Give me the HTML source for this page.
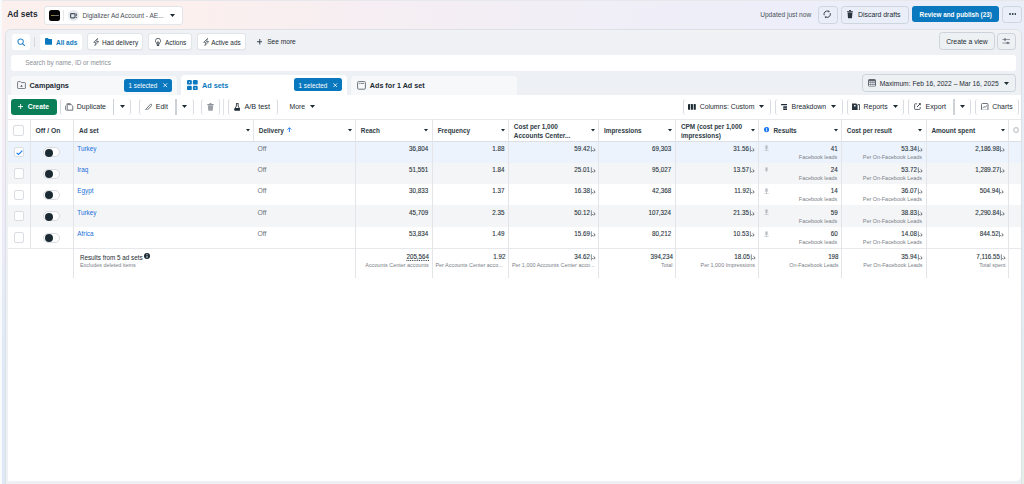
<!DOCTYPE html>
<html><head><meta charset="utf-8"><style>
*{box-sizing:border-box;margin:0;padding:0}
html,body{width:1024px;height:484px;overflow:hidden}
body{font-family:"Liberation Sans",sans-serif;color:#1c2b33;position:relative;
background:linear-gradient(90deg,#fcf0ef 0%,#fcf0ee 18%,#f6eef2 35%,#f1eef6 55%,#edeef9 75%,#e9eef9 100%);}
.abs{position:absolute}
.t{position:absolute;white-space:nowrap;line-height:1}
</style></head><body>
<div class="abs" style="left:0px;top:0px;width:1024px;height:1.2px;background:#e6e8ec"></div>
<div class="abs" style="left:0px;top:0px;width:1.5px;height:484px;background:#f9fafb"></div>
<div class="abs" style="left:1.5px;top:28px;width:4px;height:456px;background:linear-gradient(180deg,#fbeff0 0px,#f7eef3 80px,#efebf8 180px,#e3ebf7 280px,#dde9f6 340px,#dde9f6 456px)"></div>
<div class="abs" style="left:1021px;top:28px;width:3px;height:456px;background:linear-gradient(180deg,#e9eef9 0px,#e5edf6 150px,#e2ecf3 260px,#e3efe8 456px)"></div>
<div class="t" style="left:7.30px;top:10.09px;font-size:8.4px;font-weight:700;color:#1c2b33;">Ad sets</div>
<div class="abs" style="left:43.5px;top:6px;width:139px;height:18.8px;background:#fff;border:1px solid #e2e5e9;border-radius:3px"></div>
<div class="abs" style="left:49px;top:10px;width:11px;height:11px;background:#050505;border-radius:2.5px"></div>
<div class="abs" style="left:51px;top:15.2px;width:3px;height:0.8px;background:#8f8433"></div>
<div class="abs" style="left:54px;top:15.2px;width:5px;height:0.8px;background:#6e6e6e"></div>
<div class="abs" style="left:63.3px;top:10px;width:1px;height:11px;background:#e4e6ea"></div>
<div class="abs" style="left:68px;top:10px;width:10.5px;height:11px;background:#e6eaef;border-radius:50%"></div>
<svg class="abs" style="left:70px;top:13px" width="7" height="5.5" viewBox="0 0 7 5.5"><rect x="0.6" y="0.6" width="4.4" height="4.2" rx="0.8" fill="none" stroke="#4b5563" stroke-width="1.2"/><rect x="5.8" y="0.5" width="1" height="2.6" fill="#4b5563"/><rect x="5.8" y="4" width="1" height="1" fill="#4b5563"/></svg>
<div class="t" style="left:82.50px;top:13.06px;font-size:6.55px;font-weight:400;color:#4a5058;">Digializer Ad Account - AE...</div>
<svg class="abs" style="left:170.3px;top:13.7px" width="5" height="3" viewBox="0 0 5 3"><path d="M0 0H5L2.5 3Z" fill="#1c2b33"/></svg>
<div class="t" style="left:760.20px;top:12.01px;font-size:6.6px;font-weight:400;color:#4a5058;">Updated just now</div>
<div class="abs" style="left:818px;top:5.5px;width:19.5px;height:18px;background:rgba(233,238,247,0.6);border:1px solid #cfd5dd;border-radius:3.5px"></div>
<svg class="abs" style="left:823.3px;top:10.2px" width="8.4" height="8.4" viewBox="0 0 8.4 8.4"><path d="M7.21 3.11A3.2 3.2 0 0 1 3.11 7.21" fill="none" stroke="#39424b" stroke-width="1"/><path d="M1.19 5.29A3.2 3.2 0 0 1 5.29 1.19" fill="none" stroke="#39424b" stroke-width="1"/><path d="M1.60 6.66L2.66 8.43L3.55 5.99Z" fill="#39424b"/><path d="M6.80 1.74L5.74 -0.03L4.85 2.41Z" fill="#39424b"/></svg>
<div class="abs" style="left:840.5px;top:5.5px;width:68.5px;height:18px;background:rgba(233,238,247,0.6);border:1px solid #cfd5dd;border-radius:3.5px"></div>
<svg class="abs" style="left:846.8px;top:10.3px" width="6" height="8.3" viewBox="0 0 6 8.3"><rect x="0" y="1.2" width="6" height="1" rx="0.4" fill="#2b3540"/><rect x="2" y="0" width="2" height="1.5" rx="0.5" fill="#2b3540"/><path d="M0.6 2.6H5.4L5 8.2H1Z" fill="#2b3540"/></svg>
<div class="t" style="left:858.00px;top:11.66px;font-size:6.9px;font-weight:400;color:#1c2b33;">Discard drafts</div>
<div class="abs" style="left:912px;top:6.3px;width:87.3px;height:16.2px;background:#0a78be;border-radius:3px"></div>
<div class="t" style="left:919.60px;top:11.92px;font-size:6.35px;font-weight:700;color:#fff;">Review and publish (23)</div>
<div class="abs" style="left:1002.3px;top:5.5px;width:20px;height:17.7px;background:rgba(233,238,247,0.6);border:1px solid #cfd5dd;border-radius:3.5px"></div>
<svg class="abs" style="left:1008.6px;top:13.4px" width="7.5" height="2" viewBox="0 0 7.5 2"><circle cx="1" cy="1" r="0.95" fill="#2b3540"/><circle cx="3.75" cy="1" r="0.95" fill="#2b3540"/><circle cx="6.5" cy="1" r="0.95" fill="#2b3540"/></svg>
<div class="abs" style="left:5px;top:28.5px;width:1017px;height:470px;background:linear-gradient(180deg,#f0f2f5 0px,#edf0f4 30px,#eef1f4 100px);border:1px solid #dde1e6;border-radius:6px"></div>
<div class="abs" style="left:12px;top:33.5px;width:18.3px;height:16.5px;background:#fff;border-radius:3px"></div>
<svg class="abs" style="left:16.5px;top:37.5px" width="8.5" height="8.5" viewBox="0 0 8.5 8.5"><circle cx="3.6" cy="3.6" r="2.7" fill="none" stroke="#2f86c8" stroke-width="1.05"/><path d="M5.6 5.6L7.8 7.8" stroke="#2f86c8" stroke-width="1.2" stroke-linecap="round"/></svg>
<div class="abs" style="left:34.4px;top:37px;width:1px;height:9.6px;background:#d5d9df"></div>
<div class="abs" style="left:39.8px;top:33.5px;width:42.5px;height:16.5px;background:#fff;border-radius:3px"></div>
<svg class="abs" style="left:45px;top:38.2px" width="7.3" height="6.8" viewBox="0 0 7.3 6.8"><path d="M0 1A1 1 0 0 1 1 0H2.8L3.8 1H6.3A1 1 0 0 1 7.3 2V5.8A1 1 0 0 1 6.3 6.8H1A1 1 0 0 1 0 5.8Z" fill="#0a78be"/></svg>
<div class="t" style="left:56.00px;top:39.70px;font-size:6.5px;font-weight:700;color:#0a78be;">All ads</div>
<div class="abs" style="left:86.8px;top:33.2px;width:56.5px;height:17.2px;background:#fff;border:1px solid #e1e4e8;border-radius:3px;box-shadow:0 0.5px 0 #e3e6ea"></div>
<svg class="abs" style="left:92.6px;top:38px" width="6.5" height="8" viewBox="0 0 6.5 8"><path d="M4.6 0.4L0.7 4.3H3L1.9 7.6L5.8 3.5H3.5Z" fill="none" stroke="#5a626b" stroke-width="0.85" stroke-linejoin="round"/></svg>
<div class="t" style="left:102.00px;top:39.70px;font-size:6.5px;font-weight:400;color:#1c2b33;">Had delivery</div>
<div class="abs" style="left:148.3px;top:33.2px;width:43.8px;height:17.2px;background:#fff;border:1px solid #e1e4e8;border-radius:3px;box-shadow:0 0.5px 0 #e3e6ea"></div>
<svg class="abs" style="left:154.5px;top:37.5px" width="6" height="8.5" viewBox="0 0 6 8.5"><path d="M1.8 5.2A2.6 2.6 0 1 1 4.2 5.2V6.2H1.8Z" fill="none" stroke="#444c55" stroke-width="0.9"/><path d="M3 2.6L1.9 5.6H4.1Z" fill="#444c55"/><rect x="1.8" y="6.6" width="2.4" height="1.6" rx="0.6" fill="#444c55"/></svg>
<div class="t" style="left:165.00px;top:39.70px;font-size:6.5px;font-weight:400;color:#1c2b33;">Actions</div>
<div class="abs" style="left:196.8px;top:33.2px;width:49.6px;height:17.2px;background:#fff;border:1px solid #e1e4e8;border-radius:3px;box-shadow:0 0.5px 0 #e3e6ea"></div>
<svg class="abs" style="left:202.8px;top:38px" width="6.5" height="8" viewBox="0 0 6.5 8"><path d="M4.6 0.4L0.7 4.3H3L1.9 7.6L5.8 3.5H3.5Z" fill="none" stroke="#5a626b" stroke-width="0.85" stroke-linejoin="round"/></svg>
<div class="t" style="left:211.20px;top:39.78px;font-size:6.4px;font-weight:400;color:#1c2b33;">Active ads</div>
<svg class="abs" style="left:256.8px;top:39.2px" width="5.5" height="5.5" viewBox="0 0 5.5 5.5"><path d="M2.75 0V5.5M0 2.75H5.5" stroke="#2b3540" stroke-width="0.9"/></svg>
<div class="t" style="left:267.20px;top:38.91px;font-size:6.6px;font-weight:400;color:#1c2b33;">See more</div>
<div class="abs" style="left:938.6px;top:32.3px;width:56.5px;height:17.5px;background:#eef1f4;border:1px solid #cdd3da;border-radius:3.5px"></div>
<div class="t" style="left:946.20px;top:39.24px;font-size:6.8px;font-weight:400;color:#1c2b33;">Create a view</div>
<div class="abs" style="left:996.6px;top:32.5px;width:19px;height:17px;background:#eef1f4;border:1px solid #cdd3da;border-radius:3.5px"></div>
<svg class="abs" style="left:1001.8px;top:37.8px" width="8.5" height="6.5" viewBox="0 0 8.5 6.5"><path d="M0.4 1.5H8M0.4 5H8" stroke="#8a919a" stroke-width="0.9"/><circle cx="3" cy="1.5" r="1.3" fill="#737b85"/><circle cx="5.7" cy="5" r="1.3" fill="#737b85"/></svg>
<div class="abs" style="left:11px;top:54.8px;width:1004.6px;height:16.2px;background:#fff;border-radius:3px"></div>
<div class="t" style="left:25.20px;top:60.02px;font-size:6.35px;font-weight:400;color:#8d9196;">Search by name, ID or metrics</div>
<div class="abs" style="left:11px;top:76.3px;width:166px;height:19px;background:#f7f8fa;border-radius:4px 4px 0 0"></div>
<svg class="abs" style="left:17px;top:81.2px" width="9" height="8.2" viewBox="0 0 9 8.2"><path d="M0.6 1.2A0.6 0.6 0 0 1 1.2 0.6H3.4L4.3 1.6H7.8A0.6 0.6 0 0 1 8.4 2.2V7A0.6 0.6 0 0 1 7.8 7.6H1.2A0.6 0.6 0 0 1 0.6 7Z" fill="none" stroke="#737b84" stroke-width="1"/><path d="M4.5 3.8L3.2 5.8H5.8Z" fill="#4a535c"/></svg>
<div class="t" style="left:29.60px;top:82.02px;font-size:7.3px;font-weight:700;color:#1c2b33;">Campaigns</div>
<div class="abs" style="left:124.3px;top:79.2px;width:47.4px;height:12.5px;background:#0a78be;border-radius:2.5px"></div>
<div class="t" style="left:128.60px;top:83.17px;font-size:6.3px;font-weight:400;color:#fff;">1 selected</div>
<svg class="abs" style="left:163.2px;top:83.4px" width="4.5" height="4.5" viewBox="0 0 4.5 4.5"><path d="M0.4 0.4L4.1 4.1M4.1 0.4L0.4 4.1" stroke="#fff" stroke-width="0.8"/></svg>
<div class="abs" style="left:181px;top:74.8px;width:166px;height:20.5px;background:#fff;border-radius:4px 4px 0 0"></div>
<svg class="abs" style="left:187px;top:79.6px" width="11" height="10.4" viewBox="0 0 11 10.4"><rect x="0" y="0" width="4.8" height="4.6" rx="1.2" fill="#0a78be"/><rect x="5.9" y="0" width="4.8" height="4.6" rx="1.2" fill="#0a78be"/><rect x="0" y="5.7" width="4.8" height="4.6" rx="1.2" fill="#0a78be"/><rect x="5.9" y="5.7" width="4.8" height="4.6" rx="1.2" fill="#0a78be"/><rect x="1.9" y="1.8" width="1" height="1" fill="#fff"/><rect x="7.6" y="7.6" width="1.4" height="0.9" fill="#fff"/></svg>
<div class="t" style="left:202.00px;top:81.92px;font-size:7.3px;font-weight:700;color:#0a78be;">Ad sets</div>
<div class="abs" style="left:294.3px;top:78.3px;width:47.4px;height:12.8px;background:#0a78be;border-radius:2.5px"></div>
<div class="t" style="left:298.60px;top:82.57px;font-size:6.3px;font-weight:400;color:#fff;">1 selected</div>
<svg class="abs" style="left:333.2px;top:82.6px" width="4.5" height="4.5" viewBox="0 0 4.5 4.5"><path d="M0.4 0.4L4.1 4.1M4.1 0.4L0.4 4.1" stroke="#fff" stroke-width="0.8"/></svg>
<div class="abs" style="left:351px;top:76.3px;width:166px;height:19px;background:#f7f8fa;border-radius:4px 4px 0 0"></div>
<svg class="abs" style="left:357px;top:81px" width="9" height="8.8" viewBox="0 0 9 8.8"><rect x="0.6" y="0.6" width="7.8" height="7.6" rx="1" fill="none" stroke="#6b737c" stroke-width="1"/><circle cx="2.3" cy="2.5" r="0.55" fill="#6b737c"/><rect x="3.4" y="2.1" width="3.6" height="0.8" fill="#6b737c"/></svg>
<div class="t" style="left:369.80px;top:82.11px;font-size:7.2px;font-weight:700;color:#1c2b33;">Ads for 1 Ad set</div>
<div class="abs" style="left:862.4px;top:74.3px;width:153.4px;height:17.5px;background:#eef1f4;border:1px solid #cdd3da;border-radius:3.5px"></div>
<svg class="abs" style="left:868px;top:79.3px" width="8" height="7.6" viewBox="0 0 8 7.6"><rect x="0" y="0" width="8" height="7.6" rx="1.6" fill="#5f6770"/><rect x="1.00" y="2.30" width="1.6" height="1.2" fill="#f3f5f8"/><rect x="3.10" y="2.30" width="1.6" height="1.2" fill="#f3f5f8"/><rect x="5.20" y="2.30" width="1.6" height="1.2" fill="#f3f5f8"/><rect x="1.00" y="4.05" width="1.6" height="1.2" fill="#f3f5f8"/><rect x="3.10" y="4.05" width="1.6" height="1.2" fill="#f3f5f8"/><rect x="5.20" y="4.05" width="1.6" height="1.2" fill="#f3f5f8"/><rect x="1.00" y="5.80" width="1.6" height="1.2" fill="#f3f5f8"/><rect x="3.10" y="5.80" width="1.6" height="1.2" fill="#f3f5f8"/><rect x="5.20" y="5.80" width="1.6" height="1.2" fill="#f3f5f8"/></svg>
<div class="t" style="left:879.70px;top:81.13px;font-size:6.7px;font-weight:400;color:#1c2b33;">Maximum: Feb 16, 2022 – Mar 16, 2025</div>
<svg class="abs" style="left:1003.8px;top:81.7px" width="5" height="3" viewBox="0 0 5 3"><path d="M0 0H5L2.5 3Z" fill="#1c2b33"/></svg>
<div class="abs" style="left:7.5px;top:94.5px;width:1013.5px;height:386.3px;background:#fff;border-radius:0 0 5px 1px"></div>
<div class="abs" style="left:11.1px;top:98.8px;width:45.6px;height:16px;background:#0a7e56;border-radius:3px"></div>
<svg class="abs" style="left:18.2px;top:104.2px" width="5.2" height="5.2" viewBox="0 0 5.2 5.2"><path d="M2.6 0V5.2M0 2.6H5.2" stroke="#fff" stroke-width="0.9"/></svg>
<div class="t" style="left:27.80px;top:103.84px;font-size:6.8px;font-weight:700;color:#fff;">Create</div>
<div class="abs" style="left:59.7px;top:98.6px;width:71.8px;height:16.6px;border-left:1px solid #d9dde3;border-right:1px solid #d9dde3;border-radius:3px"></div>
<svg class="abs" style="left:65px;top:103px" width="8.5" height="7.8" viewBox="0 0 8.5 7.8"><path d="M2.2 1.6H6.2L7.8 3.2V7.2H2.2Z" fill="none" stroke="#5d656e" stroke-width="0.9"/><path d="M0.6 2.6V6.8L1.6 7.6" fill="none" stroke="#5d656e" stroke-width="0.8"/><path d="M1.2 1.4L2.2 0.6H5.6" fill="none" stroke="#5d656e" stroke-width="0.8"/></svg>
<div class="t" style="left:76.80px;top:102.77px;font-size:7.0px;font-weight:400;color:#1c2b33;">Duplicate</div>
<div class="abs" style="left:112.8px;top:99.2px;width:1.7px;height:15.6px;background:#cdd2d9"></div>
<svg class="abs" style="left:119.7px;top:105.1px" width="5" height="3" viewBox="0 0 5 3"><path d="M0 0H5L2.5 3Z" fill="#1c2b33"/></svg>
<div class="abs" style="left:138.8px;top:98.6px;width:55.19999999999999px;height:16.6px;border-left:1px solid #d9dde3;border-right:1px solid #d9dde3;border-radius:3px"></div>
<svg class="abs" style="left:144.8px;top:103px" width="7.5" height="7.2" viewBox="0 0 7.5 7.2"><path d="M1 6.2L5.4 1.3A1 1 0 0 1 6.8 2.6L2.3 7L0.7 7.1Z" fill="none" stroke="#5d656e" stroke-width="0.9" stroke-linejoin="round"/></svg>
<div class="t" style="left:155.80px;top:102.77px;font-size:7.0px;font-weight:400;color:#1c2b33;">Edit</div>
<div class="abs" style="left:175.3px;top:99.2px;width:1.7px;height:15.6px;background:#cdd2d9"></div>
<svg class="abs" style="left:181.9px;top:105.1px" width="5" height="3" viewBox="0 0 5 3"><path d="M0 0H5L2.5 3Z" fill="#1c2b33"/></svg>
<div class="abs" style="left:201.2px;top:98.6px;width:19.0px;height:16.6px;border-left:1px solid #d9dde3;border-right:1px solid #d9dde3;border-radius:3px"></div>
<svg class="abs" style="left:207px;top:103px" width="7" height="8" viewBox="0 0 7 8"><rect x="0.2" y="1" width="6.6" height="1.1" rx="0.5" fill="#8e959c"/><rect x="2.5" y="0" width="2" height="1.3" rx="0.5" fill="#8e959c"/><path d="M0.8 2.3H6.2L5.7 7.8H1.3Z" fill="#9aa0a6"/></svg>
<div class="abs" style="left:223px;top:99.2px;width:1px;height:15.6px;background:#dfe3e8"></div>
<div class="abs" style="left:227.7px;top:98.6px;width:50.30000000000001px;height:16.6px;border-left:1px solid #d9dde3;border-right:1px solid #d9dde3;border-radius:3px"></div>
<svg class="abs" style="left:233.9px;top:103px" width="6.5" height="7.5" viewBox="0 0 6.5 7.5"><path d="M2 0.4H4.5M2.4 0.6V3L0.4 6.6A0.6 0.6 0 0 0 0.9 7.3H5.6A0.6 0.6 0 0 0 6.1 6.6L4.1 3V0.6" fill="none" stroke="#2b3540" stroke-width="0.9"/><path d="M1.1 5L5.4 5L6 6.8A0.5 0.5 0 0 1 5.5 7.3H1A0.5 0.5 0 0 1 0.5 6.8Z" fill="#1c2b33"/></svg>
<div class="t" style="left:244.40px;top:102.52px;font-size:7.3px;font-weight:400;color:#1c2b33;">A/B test</div>
<div class="t" style="left:289.60px;top:103.94px;font-size:6.8px;font-weight:400;color:#1c2b33;">More</div>
<svg class="abs" style="left:310.1px;top:105.1px" width="5" height="3" viewBox="0 0 5 3"><path d="M0 0H5L2.5 3Z" fill="#1c2b33"/></svg>
<div class="abs" style="left:682.6px;top:98.6px;width:88.39999999999998px;height:16.6px;border-left:1px solid #d9dde3;border-right:1px solid #d9dde3;border-radius:3px"></div>
<svg class="abs" style="left:688.3px;top:104px" width="7.8" height="5.8" viewBox="0 0 7.8 5.8"><rect x="0" y="0" width="2.1" height="5.8" rx="0.4" fill="#1c2b33"/><rect x="2.85" y="0" width="2.1" height="5.8" rx="0.4" fill="#1c2b33"/><rect x="5.7" y="0" width="2.1" height="5.8" rx="0.4" fill="#1c2b33"/></svg>
<div class="t" style="left:699.70px;top:103.76px;font-size:6.9px;font-weight:400;color:#1c2b33;">Columns: Custom</div>
<svg class="abs" style="left:759.2px;top:105.1px" width="5" height="3" viewBox="0 0 5 3"><path d="M0 0H5L2.5 3Z" fill="#1c2b33"/></svg>
<div class="abs" style="left:774.8px;top:98.6px;width:68.20000000000005px;height:16.6px;border-left:1px solid #d9dde3;border-right:1px solid #d9dde3;border-radius:3px"></div>
<svg class="abs" style="left:780.8px;top:103.8px" width="6.4" height="6.6" viewBox="0 0 6.4 6.6"><rect x="0" y="0" width="6.2" height="1.3" rx="0.5" fill="#1c2b33"/><rect x="2.2" y="2.2" width="4" height="4.4" rx="0.6" fill="#2b3540"/><path d="M2.2 4.3H6.2" stroke="#fff" stroke-width="0.5"/></svg>
<div class="t" style="left:791.60px;top:103.76px;font-size:6.9px;font-weight:400;color:#1c2b33;">Breakdown</div>
<svg class="abs" style="left:831.0px;top:105.1px" width="5" height="3" viewBox="0 0 5 3"><path d="M0 0H5L2.5 3Z" fill="#1c2b33"/></svg>
<div class="abs" style="left:846.6px;top:98.6px;width:57.89999999999998px;height:16.6px;border-left:1px solid #d9dde3;border-right:1px solid #d9dde3;border-radius:3px"></div>
<svg class="abs" style="left:852px;top:102.8px" width="7.8" height="7.3" viewBox="0 0 7.8 7.3"><path d="M0 0.6H4.2L5.6 2V7H0Z" fill="#2b3540"/><path d="M5.8 1.6H7.6V7.3H1.5V7" fill="none" stroke="#2b3540" stroke-width="0.9"/><rect x="2" y="2" width="1.6" height="1.4" fill="#f0f0f0"/></svg>
<div class="t" style="left:863.60px;top:103.76px;font-size:6.9px;font-weight:400;color:#1c2b33;">Reports</div>
<svg class="abs" style="left:892.9px;top:105.1px" width="5" height="3" viewBox="0 0 5 3"><path d="M0 0H5L2.5 3Z" fill="#1c2b33"/></svg>
<div class="abs" style="left:908.2px;top:98.6px;width:63.09999999999991px;height:16.6px;border-left:1px solid #d9dde3;border-right:1px solid #d9dde3;border-radius:3px"></div>
<svg class="abs" style="left:914.3px;top:103px" width="7" height="7" viewBox="0 0 7 7"><path d="M3 0.8H1.2A0.6 0.6 0 0 0 0.6 1.4V5.8A0.6 0.6 0 0 0 1.2 6.4H5.6A0.6 0.6 0 0 0 6.2 5.8V4" fill="none" stroke="#5d656e" stroke-width="1"/><path d="M3 4L6.3 0.7" stroke="#2b3540" stroke-width="0.9"/><path d="M4.4 0.3H6.7V2.6Z" fill="#2b3540"/></svg>
<div class="t" style="left:925.60px;top:103.59px;font-size:7.1px;font-weight:400;color:#1c2b33;">Export</div>
<div class="abs" style="left:953.3px;top:99.2px;width:1.7px;height:15.6px;background:#cdd2d9"></div>
<svg class="abs" style="left:959.9px;top:105.1px" width="5" height="3" viewBox="0 0 5 3"><path d="M0 0H5L2.5 3Z" fill="#1c2b33"/></svg>
<div class="abs" style="left:975.4px;top:98.6px;width:44.10000000000002px;height:16.6px;border-left:1px solid #d9dde3;border-right:1px solid #d9dde3;border-radius:3px"></div>
<svg class="abs" style="left:981.1px;top:102.8px" width="7.5" height="7.7" viewBox="0 0 7.5 7.7"><rect x="0.5" y="0.5" width="6.5" height="6.7" rx="1" fill="none" stroke="#6b737c" stroke-width="1"/><path d="M1.6 5.2L3.2 3.6L4.2 4.4L5.9 2.2" fill="none" stroke="#5d656e" stroke-width="0.8"/></svg>
<div class="t" style="left:992.30px;top:103.76px;font-size:6.9px;font-weight:400;color:#1c2b33;">Charts</div>
<div class="abs" style="left:7.5px;top:118.8px;width:1013.5px;height:1px;background:#e6e8eb"></div>
<div class="abs" style="left:7.5px;top:140.6px;width:1013.5px;height:1px;background:#dcdfe3"></div>
<div class="abs" style="left:7.5px;top:141.6px;width:1013.5px;height:21px;background:#ecf3fd"></div>
<div class="abs" style="left:7.5px;top:162.6px;width:1013.5px;height:21.4px;background:#f4f5f7"></div>
<div class="abs" style="left:7.5px;top:205.4px;width:1013.5px;height:21.4px;background:#f4f5f7"></div>
<div class="abs" style="left:7.5px;top:248.0px;width:1013.5px;height:1px;background:#e6e8eb"></div>
<div class="abs" style="left:30px;top:119.3px;width:1px;height:128.7px;background:#e3e5e9"></div>
<div class="abs" style="left:73px;top:119.3px;width:1px;height:158.5px;background:#e3e5e9"></div>
<div class="abs" style="left:253px;top:119.3px;width:1px;height:21.700000000000003px;background:#e3e5e9"></div>
<div class="abs" style="left:355px;top:119.3px;width:1px;height:158.5px;background:#e3e5e9"></div>
<div class="abs" style="left:432px;top:119.3px;width:1px;height:158.5px;background:#e3e5e9"></div>
<div class="abs" style="left:508px;top:119.3px;width:1px;height:158.5px;background:#e3e5e9"></div>
<div class="abs" style="left:598px;top:119.3px;width:1px;height:158.5px;background:#e3e5e9"></div>
<div class="abs" style="left:675px;top:119.3px;width:1px;height:158.5px;background:#e3e5e9"></div>
<div class="abs" style="left:758px;top:119.3px;width:1px;height:158.5px;background:#e3e5e9"></div>
<div class="abs" style="left:841px;top:119.3px;width:1px;height:158.5px;background:#e3e5e9"></div>
<div class="abs" style="left:926px;top:119.3px;width:1px;height:158.5px;background:#e3e5e9"></div>
<div class="abs" style="left:1008px;top:119.3px;width:1px;height:158.5px;background:#e3e5e9"></div>
<div class="abs" style="left:13.3px;top:125px;width:11.2px;height:10.8px;background:#fff;border:1px solid #dadde1;border-radius:2px"></div>
<div class="t" style="left:35.60px;top:127.79px;font-size:6.75px;font-weight:700;color:#2e3a44;">Off / On</div>
<div class="t" style="left:79.10px;top:128.08px;font-size:6.4px;font-weight:700;color:#2e3a44;">Ad set</div>
<svg class="abs" style="left:246.4px;top:129.4px" width="4" height="2.4" viewBox="0 0 4 2.4"><path d="M0 0H4L2.0 2.4Z" fill="#1c2b33"/></svg>
<div class="t" style="left:258.70px;top:128.00px;font-size:6.5px;font-weight:700;color:#2e3a44;">Delivery</div>
<svg class="abs" style="left:287.4px;top:126.7px" width="4.8" height="5.6" viewBox="0 0 4.8 5.6"><path d="M2.4 5.6V0.8M0.5 2.6L2.4 0.7L4.3 2.6" fill="none" stroke="#1877f2" stroke-width="0.9"/></svg>
<svg class="abs" style="left:347.9px;top:129.4px" width="4" height="2.4" viewBox="0 0 4 2.4"><path d="M0 0H4L2.0 2.4Z" fill="#1c2b33"/></svg>
<div class="t" style="left:360.80px;top:128.12px;font-size:6.35px;font-weight:700;color:#2e3a44;">Reach</div>
<svg class="abs" style="left:424.3px;top:129.4px" width="4" height="2.4" viewBox="0 0 4 2.4"><path d="M0 0H4L2.0 2.4Z" fill="#1c2b33"/></svg>
<div class="t" style="left:437.70px;top:128.08px;font-size:6.4px;font-weight:700;color:#2e3a44;">Frequency</div>
<svg class="abs" style="left:501.0px;top:129.4px" width="4" height="2.4" viewBox="0 0 4 2.4"><path d="M0 0H4L2.0 2.4Z" fill="#1c2b33"/></svg>
<div class="t" style="left:513.80px;top:123.54px;font-size:6.45px;font-weight:700;color:#2e3a44;">Cost per 1,000</div>
<div class="t" style="left:513.80px;top:132.54px;font-size:6.45px;font-weight:700;color:#2e3a44;">Accounts Center...</div>
<svg class="abs" style="left:591.0px;top:129.4px" width="4" height="2.4" viewBox="0 0 4 2.4"><path d="M0 0H4L2.0 2.4Z" fill="#1c2b33"/></svg>
<div class="t" style="left:604.00px;top:128.08px;font-size:6.4px;font-weight:700;color:#2e3a44;">Impressions</div>
<svg class="abs" style="left:667.6px;top:129.4px" width="4" height="2.4" viewBox="0 0 4 2.4"><path d="M0 0H4L2.0 2.4Z" fill="#1c2b33"/></svg>
<div class="t" style="left:680.90px;top:123.54px;font-size:6.45px;font-weight:700;color:#2e3a44;">CPM (cost per 1,000</div>
<div class="t" style="left:680.90px;top:132.54px;font-size:6.45px;font-weight:700;color:#2e3a44;">impressions)</div>
<svg class="abs" style="left:751.0px;top:129.4px" width="4" height="2.4" viewBox="0 0 4 2.4"><path d="M0 0H4L2.0 2.4Z" fill="#1c2b33"/></svg>
<svg class="abs" style="left:763.8px;top:127.4px" width="5.2" height="5.2" viewBox="0 0 5.2 5.2"><circle cx="2.6" cy="2.6" r="2.6" fill="#1877f2"/><rect x="2.2" y="2.2" width="0.9" height="2.1" fill="#fff"/><rect x="2.2" y="1" width="0.9" height="0.8" fill="#fff"/></svg>
<div class="t" style="left:773.50px;top:128.08px;font-size:6.4px;font-weight:700;color:#2e3a44;">Results</div>
<svg class="abs" style="left:833.5px;top:129.4px" width="4" height="2.4" viewBox="0 0 4 2.4"><path d="M0 0H4L2.0 2.4Z" fill="#1c2b33"/></svg>
<div class="t" style="left:846.80px;top:128.08px;font-size:6.4px;font-weight:700;color:#2e3a44;">Cost per result</div>
<svg class="abs" style="left:918.2px;top:129.4px" width="4" height="2.4" viewBox="0 0 4 2.4"><path d="M0 0H4L2.0 2.4Z" fill="#1c2b33"/></svg>
<div class="t" style="left:931.40px;top:128.00px;font-size:6.5px;font-weight:700;color:#2e3a44;">Amount spent</div>
<svg class="abs" style="left:1001.3px;top:129.4px" width="4" height="2.4" viewBox="0 0 4 2.4"><path d="M0 0H4L2.0 2.4Z" fill="#1c2b33"/></svg>
<svg class="abs" style="left:1013px;top:127.4px" width="6" height="6" viewBox="0 0 6 6"><circle cx="3" cy="3" r="2.3" fill="none" stroke="#c4c8cd" stroke-width="1.2"/></svg>
<div class="abs" style="left:13.6px;top:147.0px;width:10.8px;height:10.4px;background:#fff;border:1px solid #dadde1;border-radius:2px"></div>
<svg class="abs" style="left:15.6px;top:149.6px" width="7" height="5.2" viewBox="0 0 7 5.2"><path d="M0.6 2.8L2.5 4.5L6.4 0.7" fill="none" stroke="#1877f2" stroke-width="1.1"/></svg>
<div class="abs" style="left:43.3px;top:147.3px;width:16.4px;height:10px;background:#fff;border:1px solid #d9dce1;border-radius:5px"></div>
<div class="abs" style="left:44.6px;top:148.6px;width:8px;height:8px;background:#1c2b33;border-radius:50%"></div>
<div class="t" style="left:77.30px;top:145.82px;font-size:6.35px;font-weight:400;color:#216fdb;">Turkey</div>
<div class="t" style="left:257.40px;top:145.76px;font-size:6.9px;font-weight:400;color:#6f757b;">Off</div>
<div class="t" style="right:595.60px;top:145.76px;font-size:6.9px;font-weight:400;color:#2a3640;transform:scaleX(0.9);transform-origin:100% 50%;-webkit-text-stroke:0.12px currentColor;">36,804</div>
<div class="t" style="right:519.10px;top:145.76px;font-size:6.9px;font-weight:400;color:#2a3640;transform:scaleX(0.9);transform-origin:100% 50%;-webkit-text-stroke:0.12px currentColor;">1.88</div>
<div class="t" style="right:428.80px;top:145.76px;font-size:6.9px;font-weight:400;color:#2a3640;transform:scaleX(0.9);transform-origin:100% 50%;-webkit-text-stroke:0.12px currentColor;">59.42<span style="display:inline-block;position:relative;width:6px;height:1px"><svg width="6" height="6.4" viewBox="0 0 6 6.4" style="position:absolute;left:0.4px;bottom:-1.3px"><rect x="0.3" y="0.3" width="0.75" height="6.1" fill="currentColor"/><rect x="1.8" y="4.2" width="0.8" height="0.8" fill="currentColor"/><path d="M3.4 2.4Q5.1 3.2 4.9 4.3Q4.7 5 3.2 5" fill="none" stroke="currentColor" stroke-width="0.8"/></svg></span></div>
<div class="t" style="right:352.80px;top:145.76px;font-size:6.9px;font-weight:400;color:#2a3640;transform:scaleX(0.9);transform-origin:100% 50%;-webkit-text-stroke:0.12px currentColor;">69,303</div>
<div class="t" style="right:269.40px;top:145.76px;font-size:6.9px;font-weight:400;color:#2a3640;transform:scaleX(0.9);transform-origin:100% 50%;-webkit-text-stroke:0.12px currentColor;">31.56<span style="display:inline-block;position:relative;width:6px;height:1px"><svg width="6" height="6.4" viewBox="0 0 6 6.4" style="position:absolute;left:0.4px;bottom:-1.3px"><rect x="0.3" y="0.3" width="0.75" height="6.1" fill="currentColor"/><rect x="1.8" y="4.2" width="0.8" height="0.8" fill="currentColor"/><path d="M3.4 2.4Q5.1 3.2 4.9 4.3Q4.7 5 3.2 5" fill="none" stroke="currentColor" stroke-width="0.8"/></svg></span></div>
<svg class="abs" style="left:764px;top:145.4px" width="5" height="5.8" viewBox="0 0 5 5.8"><path d="M1.2 0.4H3.8L3.4 2.6L4.6 3.6H2.9V5.2H2.1V3.6H0.4L1.6 2.6Z" fill="#b5babf"/><rect x="0.3" y="5.1" width="4.4" height="0.6" fill="#b5babf"/></svg>
<div class="t" style="right:186.80px;top:145.76px;font-size:6.9px;font-weight:400;color:#2a3640;transform:scaleX(0.9);transform-origin:100% 50%;-webkit-text-stroke:0.12px currentColor;">41</div>
<div class="t" style="right:186.80px;top:154.79px;font-size:5.45px;font-weight:400;color:#7a8087;">Facebook leads</div>
<div class="t" style="right:102.00px;top:145.76px;font-size:6.9px;font-weight:400;color:#2a3640;transform:scaleX(0.9);transform-origin:100% 50%;-webkit-text-stroke:0.12px currentColor;">53.34<span style="display:inline-block;position:relative;width:6px;height:1px"><svg width="6" height="6.4" viewBox="0 0 6 6.4" style="position:absolute;left:0.4px;bottom:-1.3px"><rect x="0.3" y="0.3" width="0.75" height="6.1" fill="currentColor"/><rect x="1.8" y="4.2" width="0.8" height="0.8" fill="currentColor"/><path d="M3.4 2.4Q5.1 3.2 4.9 4.3Q4.7 5 3.2 5" fill="none" stroke="currentColor" stroke-width="0.8"/></svg></span></div>
<div class="t" style="right:102.00px;top:154.79px;font-size:5.45px;font-weight:400;color:#7a8087;">Per On-Facebook Leads</div>
<div class="t" style="right:19.60px;top:145.76px;font-size:6.9px;font-weight:400;color:#2a3640;transform:scaleX(0.9);transform-origin:100% 50%;-webkit-text-stroke:0.12px currentColor;">2,186.98<span style="display:inline-block;position:relative;width:6px;height:1px"><svg width="6" height="6.4" viewBox="0 0 6 6.4" style="position:absolute;left:0.4px;bottom:-1.3px"><rect x="0.3" y="0.3" width="0.75" height="6.1" fill="currentColor"/><rect x="1.8" y="4.2" width="0.8" height="0.8" fill="currentColor"/><path d="M3.4 2.4Q5.1 3.2 4.9 4.3Q4.7 5 3.2 5" fill="none" stroke="currentColor" stroke-width="0.8"/></svg></span></div>
<div class="abs" style="left:13.6px;top:168.2px;width:10.8px;height:10.4px;background:#fff;border:1px solid #dadde1;border-radius:2px"></div>
<div class="abs" style="left:43.3px;top:168.5px;width:16.4px;height:10px;background:#fff;border:1px solid #d9dce1;border-radius:5px"></div>
<div class="abs" style="left:44.6px;top:169.79999999999998px;width:8px;height:8px;background:#1c2b33;border-radius:50%"></div>
<div class="t" style="left:77.30px;top:167.02px;font-size:6.35px;font-weight:400;color:#216fdb;">Iraq</div>
<div class="t" style="left:257.40px;top:166.96px;font-size:6.9px;font-weight:400;color:#6f757b;">Off</div>
<div class="t" style="right:595.60px;top:166.96px;font-size:6.9px;font-weight:400;color:#2a3640;transform:scaleX(0.9);transform-origin:100% 50%;-webkit-text-stroke:0.12px currentColor;">51,551</div>
<div class="t" style="right:519.10px;top:166.96px;font-size:6.9px;font-weight:400;color:#2a3640;transform:scaleX(0.9);transform-origin:100% 50%;-webkit-text-stroke:0.12px currentColor;">1.84</div>
<div class="t" style="right:428.80px;top:166.96px;font-size:6.9px;font-weight:400;color:#2a3640;transform:scaleX(0.9);transform-origin:100% 50%;-webkit-text-stroke:0.12px currentColor;">25.01<span style="display:inline-block;position:relative;width:6px;height:1px"><svg width="6" height="6.4" viewBox="0 0 6 6.4" style="position:absolute;left:0.4px;bottom:-1.3px"><rect x="0.3" y="0.3" width="0.75" height="6.1" fill="currentColor"/><rect x="1.8" y="4.2" width="0.8" height="0.8" fill="currentColor"/><path d="M3.4 2.4Q5.1 3.2 4.9 4.3Q4.7 5 3.2 5" fill="none" stroke="currentColor" stroke-width="0.8"/></svg></span></div>
<div class="t" style="right:352.80px;top:166.96px;font-size:6.9px;font-weight:400;color:#2a3640;transform:scaleX(0.9);transform-origin:100% 50%;-webkit-text-stroke:0.12px currentColor;">95,027</div>
<div class="t" style="right:269.40px;top:166.96px;font-size:6.9px;font-weight:400;color:#2a3640;transform:scaleX(0.9);transform-origin:100% 50%;-webkit-text-stroke:0.12px currentColor;">13.57<span style="display:inline-block;position:relative;width:6px;height:1px"><svg width="6" height="6.4" viewBox="0 0 6 6.4" style="position:absolute;left:0.4px;bottom:-1.3px"><rect x="0.3" y="0.3" width="0.75" height="6.1" fill="currentColor"/><rect x="1.8" y="4.2" width="0.8" height="0.8" fill="currentColor"/><path d="M3.4 2.4Q5.1 3.2 4.9 4.3Q4.7 5 3.2 5" fill="none" stroke="currentColor" stroke-width="0.8"/></svg></span></div>
<svg class="abs" style="left:764px;top:166.6px" width="5" height="5.8" viewBox="0 0 5 5.8"><path d="M1.2 0.4H3.8L3.4 2.6L4.6 3.6H2.9V5.2H2.1V3.6H0.4L1.6 2.6Z" fill="#b5babf"/><rect x="0.3" y="5.1" width="4.4" height="0.6" fill="#b5babf"/></svg>
<div class="t" style="right:186.80px;top:166.96px;font-size:6.9px;font-weight:400;color:#2a3640;transform:scaleX(0.9);transform-origin:100% 50%;-webkit-text-stroke:0.12px currentColor;">24</div>
<div class="t" style="right:186.80px;top:175.99px;font-size:5.45px;font-weight:400;color:#7a8087;">Facebook leads</div>
<div class="t" style="right:102.00px;top:166.96px;font-size:6.9px;font-weight:400;color:#2a3640;transform:scaleX(0.9);transform-origin:100% 50%;-webkit-text-stroke:0.12px currentColor;">53.72<span style="display:inline-block;position:relative;width:6px;height:1px"><svg width="6" height="6.4" viewBox="0 0 6 6.4" style="position:absolute;left:0.4px;bottom:-1.3px"><rect x="0.3" y="0.3" width="0.75" height="6.1" fill="currentColor"/><rect x="1.8" y="4.2" width="0.8" height="0.8" fill="currentColor"/><path d="M3.4 2.4Q5.1 3.2 4.9 4.3Q4.7 5 3.2 5" fill="none" stroke="currentColor" stroke-width="0.8"/></svg></span></div>
<div class="t" style="right:102.00px;top:175.99px;font-size:5.45px;font-weight:400;color:#7a8087;">Per On-Facebook Leads</div>
<div class="t" style="right:19.60px;top:166.96px;font-size:6.9px;font-weight:400;color:#2a3640;transform:scaleX(0.9);transform-origin:100% 50%;-webkit-text-stroke:0.12px currentColor;">1,289.27<span style="display:inline-block;position:relative;width:6px;height:1px"><svg width="6" height="6.4" viewBox="0 0 6 6.4" style="position:absolute;left:0.4px;bottom:-1.3px"><rect x="0.3" y="0.3" width="0.75" height="6.1" fill="currentColor"/><rect x="1.8" y="4.2" width="0.8" height="0.8" fill="currentColor"/><path d="M3.4 2.4Q5.1 3.2 4.9 4.3Q4.7 5 3.2 5" fill="none" stroke="currentColor" stroke-width="0.8"/></svg></span></div>
<div class="abs" style="left:13.6px;top:189.6px;width:10.8px;height:10.4px;background:#fff;border:1px solid #dadde1;border-radius:2px"></div>
<div class="abs" style="left:43.3px;top:189.9px;width:16.4px;height:10px;background:#fff;border:1px solid #d9dce1;border-radius:5px"></div>
<div class="abs" style="left:44.6px;top:191.2px;width:8px;height:8px;background:#1c2b33;border-radius:50%"></div>
<div class="t" style="left:77.30px;top:188.42px;font-size:6.35px;font-weight:400;color:#216fdb;">Egypt</div>
<div class="t" style="left:257.40px;top:188.36px;font-size:6.9px;font-weight:400;color:#6f757b;">Off</div>
<div class="t" style="right:595.60px;top:188.36px;font-size:6.9px;font-weight:400;color:#2a3640;transform:scaleX(0.9);transform-origin:100% 50%;-webkit-text-stroke:0.12px currentColor;">30,833</div>
<div class="t" style="right:519.10px;top:188.36px;font-size:6.9px;font-weight:400;color:#2a3640;transform:scaleX(0.9);transform-origin:100% 50%;-webkit-text-stroke:0.12px currentColor;">1.37</div>
<div class="t" style="right:428.80px;top:188.36px;font-size:6.9px;font-weight:400;color:#2a3640;transform:scaleX(0.9);transform-origin:100% 50%;-webkit-text-stroke:0.12px currentColor;">16.38<span style="display:inline-block;position:relative;width:6px;height:1px"><svg width="6" height="6.4" viewBox="0 0 6 6.4" style="position:absolute;left:0.4px;bottom:-1.3px"><rect x="0.3" y="0.3" width="0.75" height="6.1" fill="currentColor"/><rect x="1.8" y="4.2" width="0.8" height="0.8" fill="currentColor"/><path d="M3.4 2.4Q5.1 3.2 4.9 4.3Q4.7 5 3.2 5" fill="none" stroke="currentColor" stroke-width="0.8"/></svg></span></div>
<div class="t" style="right:352.80px;top:188.36px;font-size:6.9px;font-weight:400;color:#2a3640;transform:scaleX(0.9);transform-origin:100% 50%;-webkit-text-stroke:0.12px currentColor;">42,368</div>
<div class="t" style="right:269.40px;top:188.36px;font-size:6.9px;font-weight:400;color:#2a3640;transform:scaleX(0.9);transform-origin:100% 50%;-webkit-text-stroke:0.12px currentColor;">11.92<span style="display:inline-block;position:relative;width:6px;height:1px"><svg width="6" height="6.4" viewBox="0 0 6 6.4" style="position:absolute;left:0.4px;bottom:-1.3px"><rect x="0.3" y="0.3" width="0.75" height="6.1" fill="currentColor"/><rect x="1.8" y="4.2" width="0.8" height="0.8" fill="currentColor"/><path d="M3.4 2.4Q5.1 3.2 4.9 4.3Q4.7 5 3.2 5" fill="none" stroke="currentColor" stroke-width="0.8"/></svg></span></div>
<svg class="abs" style="left:764px;top:188.0px" width="5" height="5.8" viewBox="0 0 5 5.8"><path d="M1.2 0.4H3.8L3.4 2.6L4.6 3.6H2.9V5.2H2.1V3.6H0.4L1.6 2.6Z" fill="#b5babf"/><rect x="0.3" y="5.1" width="4.4" height="0.6" fill="#b5babf"/></svg>
<div class="t" style="right:186.80px;top:188.36px;font-size:6.9px;font-weight:400;color:#2a3640;transform:scaleX(0.9);transform-origin:100% 50%;-webkit-text-stroke:0.12px currentColor;">14</div>
<div class="t" style="right:186.80px;top:197.39px;font-size:5.45px;font-weight:400;color:#7a8087;">Facebook leads</div>
<div class="t" style="right:102.00px;top:188.36px;font-size:6.9px;font-weight:400;color:#2a3640;transform:scaleX(0.9);transform-origin:100% 50%;-webkit-text-stroke:0.12px currentColor;">36.07<span style="display:inline-block;position:relative;width:6px;height:1px"><svg width="6" height="6.4" viewBox="0 0 6 6.4" style="position:absolute;left:0.4px;bottom:-1.3px"><rect x="0.3" y="0.3" width="0.75" height="6.1" fill="currentColor"/><rect x="1.8" y="4.2" width="0.8" height="0.8" fill="currentColor"/><path d="M3.4 2.4Q5.1 3.2 4.9 4.3Q4.7 5 3.2 5" fill="none" stroke="currentColor" stroke-width="0.8"/></svg></span></div>
<div class="t" style="right:102.00px;top:197.39px;font-size:5.45px;font-weight:400;color:#7a8087;">Per On-Facebook Leads</div>
<div class="t" style="right:19.60px;top:188.36px;font-size:6.9px;font-weight:400;color:#2a3640;transform:scaleX(0.9);transform-origin:100% 50%;-webkit-text-stroke:0.12px currentColor;">504.94<span style="display:inline-block;position:relative;width:6px;height:1px"><svg width="6" height="6.4" viewBox="0 0 6 6.4" style="position:absolute;left:0.4px;bottom:-1.3px"><rect x="0.3" y="0.3" width="0.75" height="6.1" fill="currentColor"/><rect x="1.8" y="4.2" width="0.8" height="0.8" fill="currentColor"/><path d="M3.4 2.4Q5.1 3.2 4.9 4.3Q4.7 5 3.2 5" fill="none" stroke="currentColor" stroke-width="0.8"/></svg></span></div>
<div class="abs" style="left:13.6px;top:211.0px;width:10.8px;height:10.4px;background:#fff;border:1px solid #dadde1;border-radius:2px"></div>
<div class="abs" style="left:43.3px;top:211.3px;width:16.4px;height:10px;background:#fff;border:1px solid #d9dce1;border-radius:5px"></div>
<div class="abs" style="left:44.6px;top:212.6px;width:8px;height:8px;background:#1c2b33;border-radius:50%"></div>
<div class="t" style="left:77.30px;top:209.82px;font-size:6.35px;font-weight:400;color:#216fdb;">Turkey</div>
<div class="t" style="left:257.40px;top:209.76px;font-size:6.9px;font-weight:400;color:#6f757b;">Off</div>
<div class="t" style="right:595.60px;top:209.76px;font-size:6.9px;font-weight:400;color:#2a3640;transform:scaleX(0.9);transform-origin:100% 50%;-webkit-text-stroke:0.12px currentColor;">45,709</div>
<div class="t" style="right:519.10px;top:209.76px;font-size:6.9px;font-weight:400;color:#2a3640;transform:scaleX(0.9);transform-origin:100% 50%;-webkit-text-stroke:0.12px currentColor;">2.35</div>
<div class="t" style="right:428.80px;top:209.76px;font-size:6.9px;font-weight:400;color:#2a3640;transform:scaleX(0.9);transform-origin:100% 50%;-webkit-text-stroke:0.12px currentColor;">50.12<span style="display:inline-block;position:relative;width:6px;height:1px"><svg width="6" height="6.4" viewBox="0 0 6 6.4" style="position:absolute;left:0.4px;bottom:-1.3px"><rect x="0.3" y="0.3" width="0.75" height="6.1" fill="currentColor"/><rect x="1.8" y="4.2" width="0.8" height="0.8" fill="currentColor"/><path d="M3.4 2.4Q5.1 3.2 4.9 4.3Q4.7 5 3.2 5" fill="none" stroke="currentColor" stroke-width="0.8"/></svg></span></div>
<div class="t" style="right:352.80px;top:209.76px;font-size:6.9px;font-weight:400;color:#2a3640;transform:scaleX(0.9);transform-origin:100% 50%;-webkit-text-stroke:0.12px currentColor;">107,324</div>
<div class="t" style="right:269.40px;top:209.76px;font-size:6.9px;font-weight:400;color:#2a3640;transform:scaleX(0.9);transform-origin:100% 50%;-webkit-text-stroke:0.12px currentColor;">21.35<span style="display:inline-block;position:relative;width:6px;height:1px"><svg width="6" height="6.4" viewBox="0 0 6 6.4" style="position:absolute;left:0.4px;bottom:-1.3px"><rect x="0.3" y="0.3" width="0.75" height="6.1" fill="currentColor"/><rect x="1.8" y="4.2" width="0.8" height="0.8" fill="currentColor"/><path d="M3.4 2.4Q5.1 3.2 4.9 4.3Q4.7 5 3.2 5" fill="none" stroke="currentColor" stroke-width="0.8"/></svg></span></div>
<svg class="abs" style="left:764px;top:209.4px" width="5" height="5.8" viewBox="0 0 5 5.8"><path d="M1.2 0.4H3.8L3.4 2.6L4.6 3.6H2.9V5.2H2.1V3.6H0.4L1.6 2.6Z" fill="#b5babf"/><rect x="0.3" y="5.1" width="4.4" height="0.6" fill="#b5babf"/></svg>
<div class="t" style="right:186.80px;top:209.76px;font-size:6.9px;font-weight:400;color:#2a3640;transform:scaleX(0.9);transform-origin:100% 50%;-webkit-text-stroke:0.12px currentColor;">59</div>
<div class="t" style="right:186.80px;top:218.79px;font-size:5.45px;font-weight:400;color:#7a8087;">Facebook leads</div>
<div class="t" style="right:102.00px;top:209.76px;font-size:6.9px;font-weight:400;color:#2a3640;transform:scaleX(0.9);transform-origin:100% 50%;-webkit-text-stroke:0.12px currentColor;">38.83<span style="display:inline-block;position:relative;width:6px;height:1px"><svg width="6" height="6.4" viewBox="0 0 6 6.4" style="position:absolute;left:0.4px;bottom:-1.3px"><rect x="0.3" y="0.3" width="0.75" height="6.1" fill="currentColor"/><rect x="1.8" y="4.2" width="0.8" height="0.8" fill="currentColor"/><path d="M3.4 2.4Q5.1 3.2 4.9 4.3Q4.7 5 3.2 5" fill="none" stroke="currentColor" stroke-width="0.8"/></svg></span></div>
<div class="t" style="right:102.00px;top:218.79px;font-size:5.45px;font-weight:400;color:#7a8087;">Per On-Facebook Leads</div>
<div class="t" style="right:19.60px;top:209.76px;font-size:6.9px;font-weight:400;color:#2a3640;transform:scaleX(0.9);transform-origin:100% 50%;-webkit-text-stroke:0.12px currentColor;">2,290.84<span style="display:inline-block;position:relative;width:6px;height:1px"><svg width="6" height="6.4" viewBox="0 0 6 6.4" style="position:absolute;left:0.4px;bottom:-1.3px"><rect x="0.3" y="0.3" width="0.75" height="6.1" fill="currentColor"/><rect x="1.8" y="4.2" width="0.8" height="0.8" fill="currentColor"/><path d="M3.4 2.4Q5.1 3.2 4.9 4.3Q4.7 5 3.2 5" fill="none" stroke="currentColor" stroke-width="0.8"/></svg></span></div>
<div class="abs" style="left:13.6px;top:232.4px;width:10.8px;height:10.4px;background:#fff;border:1px solid #dadde1;border-radius:2px"></div>
<div class="abs" style="left:43.3px;top:232.70000000000002px;width:16.4px;height:10px;background:#fff;border:1px solid #d9dce1;border-radius:5px"></div>
<div class="abs" style="left:44.6px;top:234.0px;width:8px;height:8px;background:#1c2b33;border-radius:50%"></div>
<div class="t" style="left:77.30px;top:231.22px;font-size:6.35px;font-weight:400;color:#216fdb;">Africa</div>
<div class="t" style="left:257.40px;top:231.16px;font-size:6.9px;font-weight:400;color:#6f757b;">Off</div>
<div class="t" style="right:595.60px;top:231.16px;font-size:6.9px;font-weight:400;color:#2a3640;transform:scaleX(0.9);transform-origin:100% 50%;-webkit-text-stroke:0.12px currentColor;">53,834</div>
<div class="t" style="right:519.10px;top:231.16px;font-size:6.9px;font-weight:400;color:#2a3640;transform:scaleX(0.9);transform-origin:100% 50%;-webkit-text-stroke:0.12px currentColor;">1.49</div>
<div class="t" style="right:428.80px;top:231.16px;font-size:6.9px;font-weight:400;color:#2a3640;transform:scaleX(0.9);transform-origin:100% 50%;-webkit-text-stroke:0.12px currentColor;">15.69<span style="display:inline-block;position:relative;width:6px;height:1px"><svg width="6" height="6.4" viewBox="0 0 6 6.4" style="position:absolute;left:0.4px;bottom:-1.3px"><rect x="0.3" y="0.3" width="0.75" height="6.1" fill="currentColor"/><rect x="1.8" y="4.2" width="0.8" height="0.8" fill="currentColor"/><path d="M3.4 2.4Q5.1 3.2 4.9 4.3Q4.7 5 3.2 5" fill="none" stroke="currentColor" stroke-width="0.8"/></svg></span></div>
<div class="t" style="right:352.80px;top:231.16px;font-size:6.9px;font-weight:400;color:#2a3640;transform:scaleX(0.9);transform-origin:100% 50%;-webkit-text-stroke:0.12px currentColor;">80,212</div>
<div class="t" style="right:269.40px;top:231.16px;font-size:6.9px;font-weight:400;color:#2a3640;transform:scaleX(0.9);transform-origin:100% 50%;-webkit-text-stroke:0.12px currentColor;">10.53<span style="display:inline-block;position:relative;width:6px;height:1px"><svg width="6" height="6.4" viewBox="0 0 6 6.4" style="position:absolute;left:0.4px;bottom:-1.3px"><rect x="0.3" y="0.3" width="0.75" height="6.1" fill="currentColor"/><rect x="1.8" y="4.2" width="0.8" height="0.8" fill="currentColor"/><path d="M3.4 2.4Q5.1 3.2 4.9 4.3Q4.7 5 3.2 5" fill="none" stroke="currentColor" stroke-width="0.8"/></svg></span></div>
<svg class="abs" style="left:764px;top:230.8px" width="5" height="5.8" viewBox="0 0 5 5.8"><path d="M1.2 0.4H3.8L3.4 2.6L4.6 3.6H2.9V5.2H2.1V3.6H0.4L1.6 2.6Z" fill="#b5babf"/><rect x="0.3" y="5.1" width="4.4" height="0.6" fill="#b5babf"/></svg>
<div class="t" style="right:186.80px;top:231.16px;font-size:6.9px;font-weight:400;color:#2a3640;transform:scaleX(0.9);transform-origin:100% 50%;-webkit-text-stroke:0.12px currentColor;">60</div>
<div class="t" style="right:186.80px;top:240.19px;font-size:5.45px;font-weight:400;color:#7a8087;">Facebook leads</div>
<div class="t" style="right:102.00px;top:231.16px;font-size:6.9px;font-weight:400;color:#2a3640;transform:scaleX(0.9);transform-origin:100% 50%;-webkit-text-stroke:0.12px currentColor;">14.08<span style="display:inline-block;position:relative;width:6px;height:1px"><svg width="6" height="6.4" viewBox="0 0 6 6.4" style="position:absolute;left:0.4px;bottom:-1.3px"><rect x="0.3" y="0.3" width="0.75" height="6.1" fill="currentColor"/><rect x="1.8" y="4.2" width="0.8" height="0.8" fill="currentColor"/><path d="M3.4 2.4Q5.1 3.2 4.9 4.3Q4.7 5 3.2 5" fill="none" stroke="currentColor" stroke-width="0.8"/></svg></span></div>
<div class="t" style="right:102.00px;top:240.19px;font-size:5.45px;font-weight:400;color:#7a8087;">Per On-Facebook Leads</div>
<div class="t" style="right:19.60px;top:231.16px;font-size:6.9px;font-weight:400;color:#2a3640;transform:scaleX(0.9);transform-origin:100% 50%;-webkit-text-stroke:0.12px currentColor;">844.52<span style="display:inline-block;position:relative;width:6px;height:1px"><svg width="6" height="6.4" viewBox="0 0 6 6.4" style="position:absolute;left:0.4px;bottom:-1.3px"><rect x="0.3" y="0.3" width="0.75" height="6.1" fill="currentColor"/><rect x="1.8" y="4.2" width="0.8" height="0.8" fill="currentColor"/><path d="M3.4 2.4Q5.1 3.2 4.9 4.3Q4.7 5 3.2 5" fill="none" stroke="currentColor" stroke-width="0.8"/></svg></span></div>
<div class="t" style="left:79.90px;top:254.87px;font-size:6.3px;font-weight:400;color:#1c2b33;">Results from 5 ad sets</div>
<svg class="abs" style="left:144.1px;top:253.1px" width="6" height="6" viewBox="0 0 6 6"><circle cx="3" cy="3" r="3" fill="#1c2b33"/><rect x="2.55" y="2.6" width="0.9" height="2.3" fill="#fff"/><circle cx="3" cy="1.6" r="0.5" fill="#fff"/></svg>
<div class="t" style="left:79.90px;top:262.59px;font-size:5.45px;font-weight:400;color:#7a8087;">Excludes deleted items</div>
<div class="t" style="right:595.20px;top:254.36px;font-size:6.9px;font-weight:400;color:#2a3640;transform:scaleX(0.9);transform-origin:100% 50%;-webkit-text-stroke:0.12px currentColor;"><span style="border-bottom:1px dotted #1c2b33">205,564</span></div>
<div class="t" style="right:595.20px;top:262.59px;font-size:5.45px;font-weight:400;color:#7a8087;">Accounts Center accounts</div>
<div class="t" style="right:518.20px;top:254.36px;font-size:6.9px;font-weight:400;color:#2a3640;transform:scaleX(0.9);transform-origin:100% 50%;-webkit-text-stroke:0.12px currentColor;">1.92</div>
<div class="t" style="right:521.20px;top:262.59px;font-size:5.45px;font-weight:400;color:#7a8087;">Per Accounts Center acco...</div>
<div class="t" style="right:428.40px;top:254.36px;font-size:6.9px;font-weight:400;color:#2a3640;transform:scaleX(0.9);transform-origin:100% 50%;-webkit-text-stroke:0.12px currentColor;">34.62<span style="display:inline-block;position:relative;width:6px;height:1px"><svg width="6" height="6.4" viewBox="0 0 6 6.4" style="position:absolute;left:0.4px;bottom:-1.3px"><rect x="0.3" y="0.3" width="0.75" height="6.1" fill="currentColor"/><rect x="1.8" y="4.2" width="0.8" height="0.8" fill="currentColor"/><path d="M3.4 2.4Q5.1 3.2 4.9 4.3Q4.7 5 3.2 5" fill="none" stroke="currentColor" stroke-width="0.8"/></svg></span></div>
<div class="t" style="right:429.60px;top:262.59px;font-size:5.45px;font-weight:400;color:#7a8087;">Per 1,000 Accounts Center acco...</div>
<div class="t" style="right:351.50px;top:254.36px;font-size:6.9px;font-weight:400;color:#2a3640;transform:scaleX(0.9);transform-origin:100% 50%;-webkit-text-stroke:0.12px currentColor;">394,234</div>
<div class="t" style="right:351.50px;top:262.59px;font-size:5.45px;font-weight:400;color:#7a8087;">Total</div>
<div class="t" style="right:269.00px;top:254.36px;font-size:6.9px;font-weight:400;color:#2a3640;transform:scaleX(0.9);transform-origin:100% 50%;-webkit-text-stroke:0.12px currentColor;">18.05<span style="display:inline-block;position:relative;width:6px;height:1px"><svg width="6" height="6.4" viewBox="0 0 6 6.4" style="position:absolute;left:0.4px;bottom:-1.3px"><rect x="0.3" y="0.3" width="0.75" height="6.1" fill="currentColor"/><rect x="1.8" y="4.2" width="0.8" height="0.8" fill="currentColor"/><path d="M3.4 2.4Q5.1 3.2 4.9 4.3Q4.7 5 3.2 5" fill="none" stroke="currentColor" stroke-width="0.8"/></svg></span></div>
<div class="t" style="right:269.00px;top:262.59px;font-size:5.45px;font-weight:400;color:#7a8087;">Per 1,000 Impressions</div>
<div class="t" style="right:185.50px;top:254.36px;font-size:6.9px;font-weight:400;color:#2a3640;transform:scaleX(0.9);transform-origin:100% 50%;-webkit-text-stroke:0.12px currentColor;">198</div>
<div class="t" style="right:185.50px;top:262.59px;font-size:5.45px;font-weight:400;color:#7a8087;">On-Facebook Leads</div>
<div class="t" style="right:101.50px;top:254.36px;font-size:6.9px;font-weight:400;color:#2a3640;transform:scaleX(0.9);transform-origin:100% 50%;-webkit-text-stroke:0.12px currentColor;">35.94<span style="display:inline-block;position:relative;width:6px;height:1px"><svg width="6" height="6.4" viewBox="0 0 6 6.4" style="position:absolute;left:0.4px;bottom:-1.3px"><rect x="0.3" y="0.3" width="0.75" height="6.1" fill="currentColor"/><rect x="1.8" y="4.2" width="0.8" height="0.8" fill="currentColor"/><path d="M3.4 2.4Q5.1 3.2 4.9 4.3Q4.7 5 3.2 5" fill="none" stroke="currentColor" stroke-width="0.8"/></svg></span></div>
<div class="t" style="right:101.50px;top:262.59px;font-size:5.45px;font-weight:400;color:#7a8087;">Per On-Facebook Leads</div>
<div class="t" style="right:18.40px;top:254.36px;font-size:6.9px;font-weight:400;color:#2a3640;transform:scaleX(0.9);transform-origin:100% 50%;-webkit-text-stroke:0.12px currentColor;">7,116.55<span style="display:inline-block;position:relative;width:6px;height:1px"><svg width="6" height="6.4" viewBox="0 0 6 6.4" style="position:absolute;left:0.4px;bottom:-1.3px"><rect x="0.3" y="0.3" width="0.75" height="6.1" fill="currentColor"/><rect x="1.8" y="4.2" width="0.8" height="0.8" fill="currentColor"/><path d="M3.4 2.4Q5.1 3.2 4.9 4.3Q4.7 5 3.2 5" fill="none" stroke="currentColor" stroke-width="0.8"/></svg></span></div>
<div class="t" style="right:18.40px;top:262.59px;font-size:5.45px;font-weight:400;color:#7a8087;">Total spent</div>
</body></html>
